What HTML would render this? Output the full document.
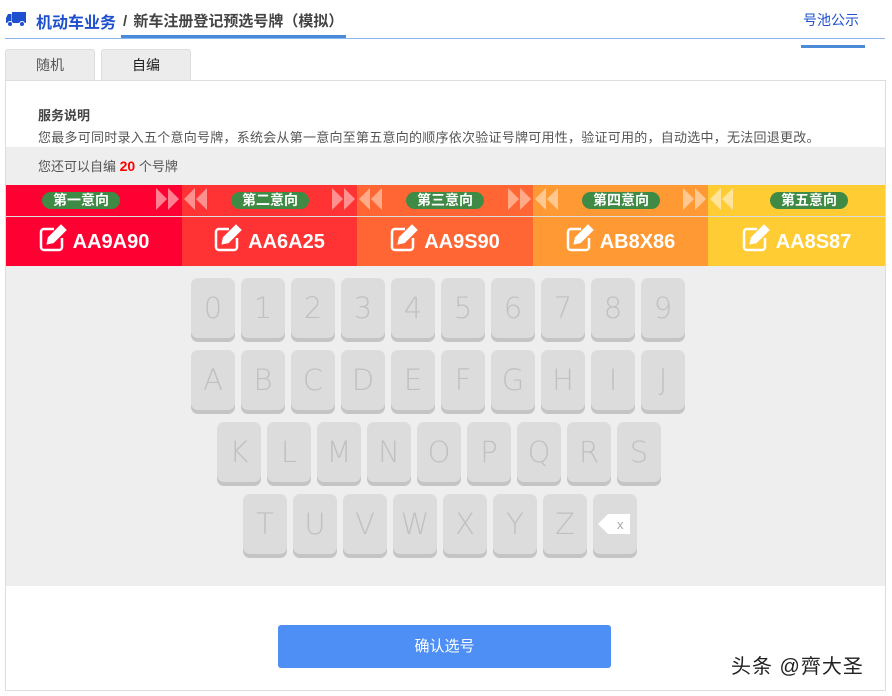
<!DOCTYPE html>
<html><head><meta charset="utf-8"><style>
*{margin:0;padding:0;box-sizing:border-box}
body{width:892px;height:696px;background:#fff;font-family:"Liberation Sans","Noto Sans CJK SC",sans-serif;position:relative;overflow:hidden}
.abs{position:absolute}
.key{position:absolute;width:44px;height:60px;background:#dcdcdc;border-radius:7px;box-shadow:0 4px 0 #c4c4c4;color:#c0c0c0;font-size:29px;text-align:center;line-height:60px;font-family:"DejaVu Sans",sans-serif;font-weight:300}
.seg{position:absolute;top:185px;height:81px}
.lab{position:absolute;top:7px;height:17px;border-radius:9px;background:#3f8a45;color:#fff;font-size:14px;font-weight:bold;line-height:17px;width:78px;text-align:center}
.plate{position:absolute;top:31px;left:0;width:100%;height:50px;color:#fff;font-size:20px;font-weight:bold;text-align:center;line-height:50px;border-top:1px solid #ddd}
.plate svg{vertical-align:-4px;margin-right:6px}
.arr{position:absolute;top:3px;font-size:0}
</style></head><body>
<svg class="abs" style="left:6px;top:11px" width="20" height="16" viewBox="0 0 20 16"><rect x="6" y="1" width="14" height="11" fill="#1d4fcf"/><path d="M0 7 L2 3 H5.5 V12 H0Z" fill="#1d4fcf"/><circle cx="4" cy="13" r="2.5" fill="#1d4fcf" stroke="#fff"/><circle cx="16" cy="13" r="2.5" fill="#1d4fcf" stroke="#fff"/></svg>
<div class="abs" style="left:36px;top:9px;font-size:16px;color:#1d4fcf;font-weight:bold">机动车业务</div>
<div class="abs" style="left:123px;top:10px;font-size:15px;color:#444;font-weight:bold">/ <span style="margin-left:2px">新车注册登记预选号牌（模拟）</span></div>
<div class="abs" style="left:121px;top:35px;width:225px;height:3px;background:#4a8ad8"></div>
<div class="abs" style="left:5px;top:38px;width:880px;height:1px;background:#8ab8ec"></div>
<div class="abs" style="left:803px;top:10px;font-size:14px;color:#1d4fcf">号池公示</div>
<div class="abs" style="left:801px;top:45px;width:64px;height:3px;background:#4a8ad8"></div>

<div class="abs" style="left:5px;top:49px;width:90px;height:32px;background:#ececec;border:1px solid #ddd;border-bottom:none;border-radius:3px 3px 0 0;font-size:14px;color:#555;text-align:center;line-height:31px">随机</div>
<div class="abs" style="left:101px;top:49px;width:90px;height:32px;background:#ececec;border:1px solid #ddd;border-bottom:none;border-radius:3px 3px 0 0;font-size:14px;color:#222;text-align:center;line-height:31px">自编</div>
<div class="abs" style="left:5px;top:80px;width:881px;height:611px;border:1px solid #ddd"></div>

<div class="abs" style="left:38px;top:105px;font-size:13px;font-weight:bold;color:#444">服务说明</div>
<div class="abs" style="left:38px;top:127px;font-size:13px;color:#555;white-space:nowrap;letter-spacing:0.25px">您最多可同时录入五个意向号牌，系统会从第一意向至第五意向的顺序依次验证号牌可用性，验证可用的，自动选中，无法回退更改。</div>
<div class="abs" style="left:6px;top:147px;width:879px;height:439px;background:#eee"></div>
<div class="abs" style="left:38px;top:156px;font-size:13px;color:#555">您还可以自编 <b style="color:#f00;font-size:14px">20</b> 个号牌</div>

<div class="seg" style="left:6px;width:176px;background:#ff0033"><div class="lab" style="left:36px">第一意向</div><div class="plate"><svg width="28" height="28" viewBox="0 0 28 28" fill="none" stroke="#fff" stroke-width="2.5"><path d="M15 5H5a3 3 0 0 0-3 3v15a3 3 0 0 0 3 3h15a3 3 0 0 0 3-3v-9"/><path d="M22 2l4 4-12 12-5 1 1-5z" fill="#fff"/></svg>AA9A90</div>
<svg class="arr" style="left:150px" width="24" height="22"><path d="M0 0L11 11 0 22ZM12 0L23 11 12 22Z" fill="#ff8090"/></svg></div>
<div class="seg" style="left:182px;width:175px;background:#ff3333"><svg class="arr" style="left:2px" width="24" height="22"><path d="M11 0L0 11 11 22ZM23 0L12 11 23 22Z" fill="#ff9090"/></svg><div class="lab" style="left:49px">第二意向</div><div class="plate"><svg width="28" height="28" viewBox="0 0 28 28" fill="none" stroke="#fff" stroke-width="2.5"><path d="M15 5H5a3 3 0 0 0-3 3v15a3 3 0 0 0 3 3h15a3 3 0 0 0 3-3v-9"/><path d="M22 2l4 4-12 12-5 1 1-5z" fill="#fff"/></svg>AA6A25</div>
<svg class="arr" style="left:150px" width="24" height="22"><path d="M0 0L11 11 0 22ZM12 0L23 11 12 22Z" fill="#ff9090"/></svg></div>
<div class="seg" style="left:357px;width:176px;background:#ff6633"><svg class="arr" style="left:2px" width="24" height="22"><path d="M11 0L0 11 11 22ZM23 0L12 11 23 22Z" fill="#ffaa88"/></svg><div class="lab" style="left:49px">第三意向</div><div class="plate"><svg width="28" height="28" viewBox="0 0 28 28" fill="none" stroke="#fff" stroke-width="2.5"><path d="M15 5H5a3 3 0 0 0-3 3v15a3 3 0 0 0 3 3h15a3 3 0 0 0 3-3v-9"/><path d="M22 2l4 4-12 12-5 1 1-5z" fill="#fff"/></svg>AA9S90</div>
<svg class="arr" style="left:151px" width="24" height="22"><path d="M0 0L11 11 0 22ZM12 0L23 11 12 22Z" fill="#ffaa88"/></svg></div>
<div class="seg" style="left:533px;width:175px;background:#ff9933"><svg class="arr" style="left:2px" width="24" height="22"><path d="M11 0L0 11 11 22ZM23 0L12 11 23 22Z" fill="#ffc890"/></svg><div class="lab" style="left:49px">第四意向</div><div class="plate"><svg width="28" height="28" viewBox="0 0 28 28" fill="none" stroke="#fff" stroke-width="2.5"><path d="M15 5H5a3 3 0 0 0-3 3v15a3 3 0 0 0 3 3h15a3 3 0 0 0 3-3v-9"/><path d="M22 2l4 4-12 12-5 1 1-5z" fill="#fff"/></svg>AB8X86</div>
<svg class="arr" style="left:150px" width="24" height="22"><path d="M0 0L11 11 0 22ZM12 0L23 11 12 22Z" fill="#ffc890"/></svg></div>
<div class="seg" style="left:708px;width:177px;background:#ffcc33"><svg class="arr" style="left:2px" width="24" height="22"><path d="M11 0L0 11 11 22ZM23 0L12 11 23 22Z" fill="#ffe49a"/></svg><div class="lab" style="left:62px">第五意向</div><div class="plate"><svg width="28" height="28" viewBox="0 0 28 28" fill="none" stroke="#fff" stroke-width="2.5"><path d="M15 5H5a3 3 0 0 0-3 3v15a3 3 0 0 0 3 3h15a3 3 0 0 0 3-3v-9"/><path d="M22 2l4 4-12 12-5 1 1-5z" fill="#fff"/></svg>AA8S87</div></div>

<div class="key" style="left:191px;top:278px">0</div><div class="key" style="left:241px;top:278px">1</div><div class="key" style="left:291px;top:278px">2</div><div class="key" style="left:341px;top:278px">3</div><div class="key" style="left:391px;top:278px">4</div><div class="key" style="left:441px;top:278px">5</div><div class="key" style="left:491px;top:278px">6</div><div class="key" style="left:541px;top:278px">7</div><div class="key" style="left:591px;top:278px">8</div><div class="key" style="left:641px;top:278px">9</div>
<div class="key" style="left:191px;top:350px">A</div><div class="key" style="left:241px;top:350px">B</div><div class="key" style="left:291px;top:350px">C</div><div class="key" style="left:341px;top:350px">D</div><div class="key" style="left:391px;top:350px">E</div><div class="key" style="left:441px;top:350px">F</div><div class="key" style="left:491px;top:350px">G</div><div class="key" style="left:541px;top:350px">H</div><div class="key" style="left:591px;top:350px">I</div><div class="key" style="left:641px;top:350px">J</div>
<div class="key" style="left:217px;top:422px">K</div><div class="key" style="left:267px;top:422px">L</div><div class="key" style="left:317px;top:422px">M</div><div class="key" style="left:367px;top:422px">N</div><div class="key" style="left:417px;top:422px">O</div><div class="key" style="left:467px;top:422px">P</div><div class="key" style="left:517px;top:422px">Q</div><div class="key" style="left:567px;top:422px">R</div><div class="key" style="left:617px;top:422px">S</div>
<div class="key" style="left:243px;top:494px">T</div><div class="key" style="left:293px;top:494px">U</div><div class="key" style="left:343px;top:494px">V</div><div class="key" style="left:393px;top:494px">W</div><div class="key" style="left:443px;top:494px">X</div><div class="key" style="left:493px;top:494px">Y</div><div class="key" style="left:543px;top:494px">Z</div>
<div class="key" style="left:593px;top:494px"><svg style="position:absolute;left:5px;top:20px" width="32" height="20" viewBox="0 0 32 20"><path d="M0 10L10 0H32V20H10Z" fill="#fff"/><text x="19" y="15" font-size="13" fill="#aaa" font-family="Liberation Sans">x</text></svg></div>

<div class="abs" style="left:278px;top:625px;width:333px;height:43px;background:#4e8ff5;border-radius:3px;color:#fff;font-size:15px;text-align:center;line-height:43px">确认选号</div>
<div class="abs" style="left:731px;top:650px;font-size:20px;color:#222;letter-spacing:1px">头条 @齊大圣</div>
</body></html>
